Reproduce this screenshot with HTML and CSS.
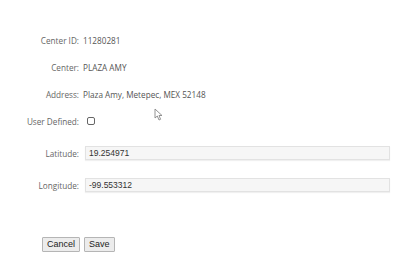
FILE: index.html
```html
<!DOCTYPE html>
<html lang="en">
<head>
    <meta charset="UTF-8">
    <meta name="viewport" content="width=device-width, initial-scale=1.0">
    <title>Center</title>
    <link rel="stylesheet" href="styles.css">
</head>
<body>
    <form class="center-form">
        <div class="row">
            <label class="label">Center ID:</label>
            <span class="value">11280281</span>
        </div>
        <div class="row">
            <label class="label">Center:</label>
            <span class="value">PLAZA AMY</span>
        </div>
        <div class="row">
            <label class="label">Address:</label>
            <span class="value">Plaza Amy, Metepec, MEX 52148</span>
        </div>
        <div class="row">
            <label class="label">User Defined:</label>
            <input type="checkbox" class="check">
        </div>
        <div class="row input-row">
            <label class="label">Latitude:</label>
            <input type="text" class="text-input" value="19.254971">
        </div>
        <div class="row input-row">
            <label class="label">Longitude:</label>
            <input type="text" class="text-input" value="-99.553312">
        </div>
        <div class="buttons">
            <button type="button" class="btn">Cancel</button>
            <button type="button" class="btn">Save</button>
        </div>
    </form>

    <!-- mouse pointer in the capture -->
    <svg class="pointer" width="10" height="13" viewBox="0 0 10 13">
        <path d="M1 1 L1 10 L3.3 8 L5 12 L6.6 11.3 L5 7.5 L8 7.5 Z" fill="#fff" stroke="#888" stroke-width="0.9" stroke-linejoin="round"/>
    </svg>
</body>
</html>
```

FILE: styles.css
```css
body {
    margin: 0;
    background-color: #fff;
    font-family: "Open Sans", "Noto Sans", sans-serif;
    font-size: 8.2px;
    color: #666;
}

.center-form {
    padding-top: 33px;
    width: 390px;
}

.row {
    display: flex;
    align-items: center;
    height: 14px;
    margin-bottom: 13px;
}

.input-row {
    margin-bottom: 0;
    margin-top: 18px;
}

.label {
    width: 83px;
    text-align: right;
    padding-right: 4px;
    box-sizing: border-box;
    flex-shrink: 0;
}

.value {
    color: #555;
}

.check {
    appearance: none;
    margin: 0 0 0 4px;
    width: 8px;
    height: 8px;
    border: 1px solid #666;
    border-radius: 2px;
    background-color: #fff;
}

.text-input {
    flex: 1;
    margin: 0 0 0 2px;
    height: 14px;
    box-sizing: border-box;
    padding: 0 3px;
    border: 1px solid #e2e2e2;
    background-color: #f6f6f6;
    box-shadow: 0 1px 1px rgba(0, 0, 0, 0.06);
    font-family: "Liberation Sans", Arial, sans-serif;
    font-size: 8.5px;
    color: #333;
}

.buttons {
    display: flex;
    gap: 4px;
    margin-top: 45px;
    padding-left: 42px;
}

.btn {
    height: 15px;
    margin: 0;
    padding: 0 4px;
    border: 1px solid #b5b5b5;
    border-radius: 1px;
    background-color: #ececec;
    font-family: "Liberation Sans", Arial, sans-serif;
    font-size: 9px;
    color: #222;
    line-height: 13px;
}

.pointer {
    position: absolute;
    left: 154px;
    top: 108px;
}
```
